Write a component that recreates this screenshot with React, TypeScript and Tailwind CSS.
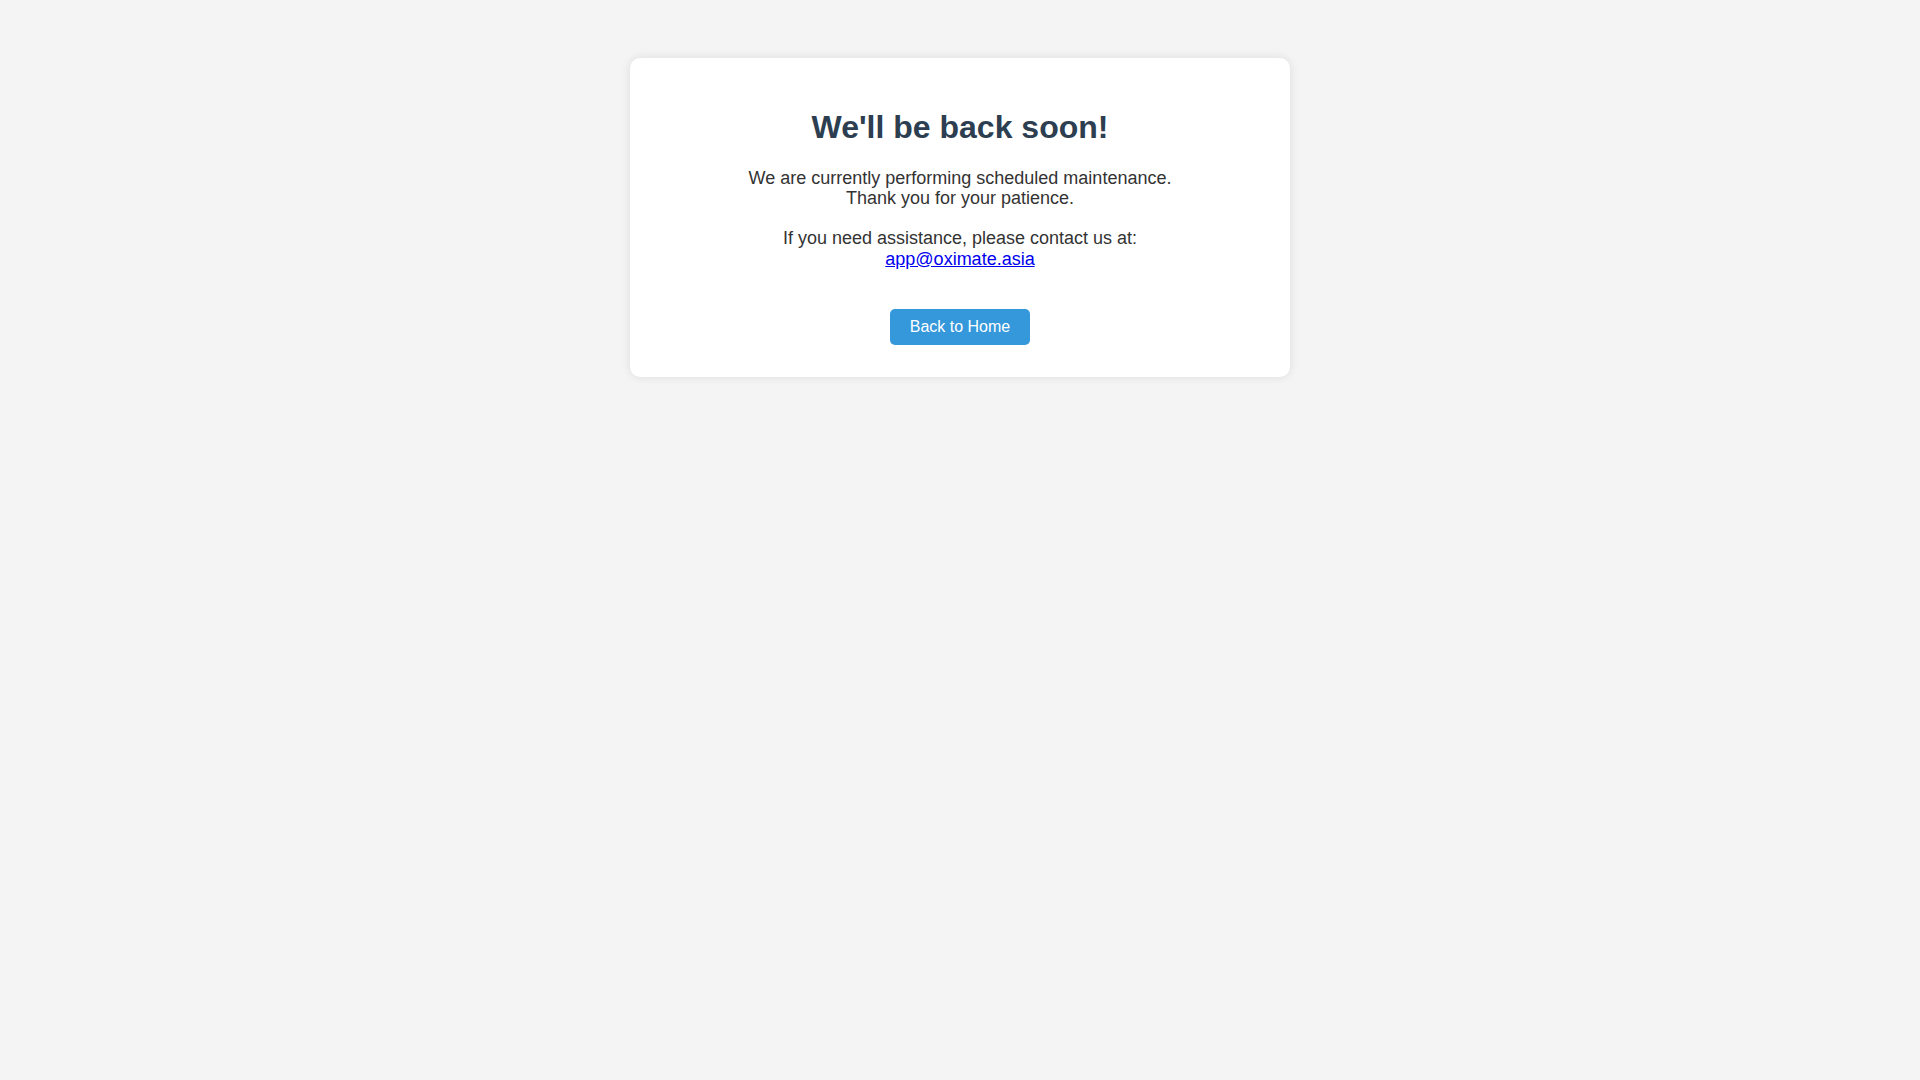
export default function App() {
  return (
    <div className="min-h-screen bg-[#f4f4f4] pt-[58px] font-['Liberation_Sans',Arial,sans-serif]">
      <div className="mx-auto w-[660px] rounded-[10px] bg-white px-[30px] pt-[30px] pb-[32px] text-center shadow-[0_0_10px_rgba(0,0,0,0.1)]">
        <h1 className="mt-[21px] mb-[22px] text-[32px] font-bold leading-[1.15] text-[#2c3e50]">
          We'll be back soon!
        </h1>
        <p className="text-[18px] leading-[1.15] text-[#333]">
          We are currently performing scheduled maintenance.
          <br />
          Thank you for your patience.
        </p>
        <p className="mt-[19px] text-[18px] leading-[1.15] text-[#333]">
          If you need assistance, please contact us at:
          <br />
          <a href="mailto:app@oximate.asia" className="text-[#0000ee] underline">
            app@oximate.asia
          </a>
        </p>
        <div className="mt-[39px]">
          <a
            href="#"
            className="inline-block rounded-[5px] bg-[#3498db] px-5 py-[9px] text-[16px] leading-[1.15] text-white"
          >
            Back to Home
          </a>
        </div>
      </div>
    </div>
  );
}
